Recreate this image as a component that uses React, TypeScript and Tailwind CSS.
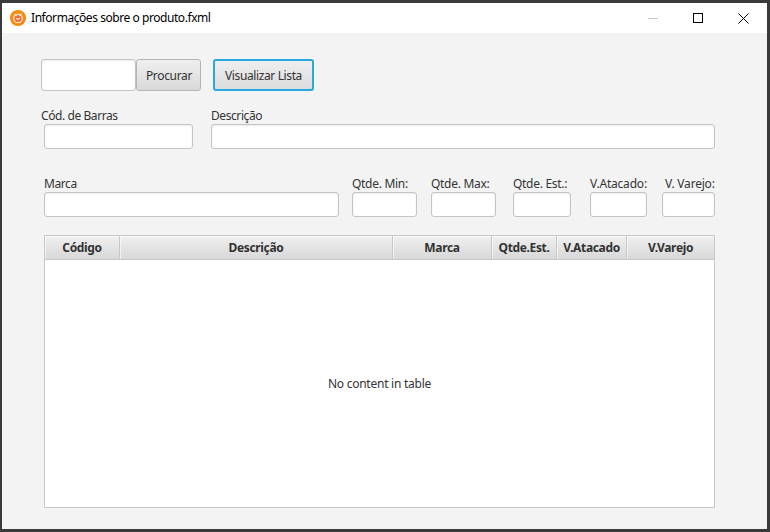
const font = "font-['Noto_Sans','Open_Sans',sans-serif]";

function Field({ label, className, labelClass = "tracking-[-0.42px]" }: { label: string; className: string; labelClass?: string }) {
  return (
    <div className={`flex flex-col ${className}`}>
      <div className={`h-[16px] text-[12px] leading-[16px] text-[#333] whitespace-nowrap ${labelClass}`}>{label}</div>
      <div className="h-[25px] rounded-[3px] border border-[#c4c4c4] bg-white shadow-[inset_0_1px_2px_rgba(0,0,0,0.08)]" />
    </div>
  );
}

function Head({ label, className }: { label: string; className: string }) {
  return (
    <div className={`flex items-center justify-center border-r border-[#c8c8c8] shadow-[inset_1px_1px_0_rgba(255,255,255,0.6)] text-[12px] font-bold tracking-[-0.35px] text-[#333] ${className}`}>
      {label}
    </div>
  );
}

export default function App() {
  return (
    <div className={`w-[770px] h-[532px] bg-[#3a3a3a] pt-[3px] pl-[2px] pr-[3px] pb-[3px] ${font}`}>
      <div className="flex h-full flex-col bg-[#f3f3f3]">
        <div className="flex h-[30px] items-center bg-white">
          <svg width="18" height="18" viewBox="0 0 18 18" className="ml-[7px]">
            <defs>
              <radialGradient id="g" cx="50%" cy="45%" r="60%">
                <stop offset="0%" stopColor="#f9a825" />
                <stop offset="100%" stopColor="#f57c00" />
              </radialGradient>
            </defs>
            <circle cx="9" cy="9" r="8" fill="url(#g)" />
            <circle cx="9" cy="9.5" r="4.2" fill="#f0683a" stroke="#fbe3c8" strokeWidth="1.3" />
            <path d="M5.5 5l2.2 1.8M12.5 5l-2.2 1.8M7 9l2 1.5 2-1.5" fill="none" stroke="#fbe3c8" strokeWidth="1.1" />
          </svg>
          <div className="ml-[4px] text-[12px] tracking-[-0.44px] text-black whitespace-nowrap">Informações sobre o produto.fxml</div>
          <div className="ml-auto flex items-center">
            <div className="h-px w-[10px] bg-[#c8c8c8] mr-[35px]" />
            <div className="h-[10px] w-[10px] border border-black mr-[35px]" />
            <svg width="11" height="11" viewBox="0 0 11 11" className="mr-[18px]">
              <path d="M0.5 0.5L10.5 10.5M10.5 0.5L0.5 10.5" stroke="#000" strokeWidth="1" />
            </svg>
          </div>
        </div>

        <div className="flex flex-1 flex-col">
          <div className="mt-[26px] ml-[39px] flex h-[32px]">
            <div className="w-[95px] rounded-[3px] border border-[#c4c4c4] bg-white shadow-[inset_0_1px_2px_rgba(0,0,0,0.08)]" />
            <button className="flex w-[65px] items-center justify-center rounded-[3px] border border-[#b4b4b4] bg-gradient-to-b from-[#efefef] to-[#d9d9d9] pt-px pl-px text-[12px] tracking-[-0.34px] text-[#333]">Procurar</button>
            <button className="ml-[12px] flex w-[101px] items-center justify-center rounded-[3px] border-2 border-[#2aa9de] bg-gradient-to-b from-[#efefef] to-[#dcdcdc] pt-px text-[12px] tracking-[-0.38px] text-[#333]">Visualizar Lista</button>
          </div>

          <div className="mt-[17px] ml-[39px] flex">
            <div className="flex w-[152px] flex-col">
              <div className="h-[16px] text-[12px] leading-[16px] tracking-[-0.42px] text-[#333] whitespace-nowrap">Cód. de Barras</div>
              <div className="ml-[3px] h-[25px] rounded-[3px] border border-[#c4c4c4] bg-white shadow-[inset_0_1px_2px_rgba(0,0,0,0.08)]" />
            </div>
            <Field label="Descrição" className="ml-[18px] w-[504px]" />
          </div>

          <div className="mt-[27px] ml-[42px] flex">
            <Field label="Marca" className="w-[295px]" />
            <Field label="Qtde. Min:" className="ml-[13px] w-[65px]" labelClass="tracking-[-0.3px]" />
            <Field label="Qtde. Max:" className="ml-[14px] w-[65px]" labelClass="tracking-[-0.3px]" />
            <Field label="Qtde. Est.:" className="ml-[17px] w-[58px]" labelClass="tracking-[-0.3px]" />
            <Field label="V.Atacado:" className="ml-[19px] w-[57px]" labelClass="tracking-[-0.2px]" />
            <Field label="V. Varejo:" className="ml-[15px] w-[53px]" labelClass="pl-[3px] tracking-[-0.2px]" />
          </div>

          <div className="mt-[18px] ml-[42px] flex h-[273px] w-[671px] flex-col border border-[#c8c8c8] bg-white">
            <div className="flex h-[24px] bg-gradient-to-b from-[#f0f0f0] to-[#d8d8d8] border-b border-[#c8c8c8]">
              <Head label="Código" className="w-[75px]" />
              <Head label="Descrição" className="w-[273px]" />
              <Head label="Marca" className="w-[99px]" />
              <Head label="Qtde.Est." className="w-[65px]" />
              <Head label="V.Atacado" className="w-[70px]" />
              <Head label="V.Varejo" className="flex-1 border-r-0" />
            </div>
            <div className="flex flex-1 items-center justify-center text-[12px] tracking-[-0.25px] text-[#333]">No content in table</div>
          </div>
        </div>
      </div>
    </div>
  );
}
